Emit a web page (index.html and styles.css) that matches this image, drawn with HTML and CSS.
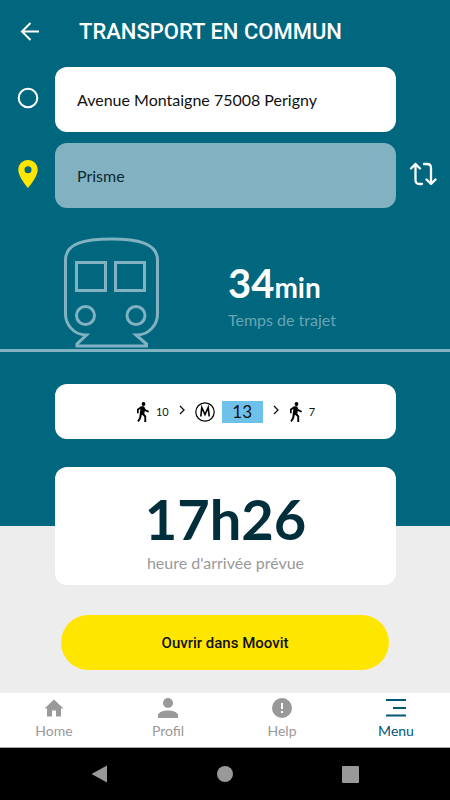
FILE: index.html
```html
<!DOCTYPE html>
<html lang="fr">
<head>
  <meta charset="UTF-8">
  <meta name="viewport" content="width=device-width, initial-scale=1.0">
  <title>Transport en commun</title>
  <link rel="stylesheet" href="styles.css">
</head>
<body>
  <div class="screen">
    <!-- Header -->
    <header class="header">
      <button class="icon-button" type="button" aria-label="Retour">
        <svg width="20" height="20" viewBox="0 0 20 20" fill="none" stroke="#fff" stroke-width="2">
          <path d="M19 9.500H2M10.500 1L2 9.500L10.500 18"/>
        </svg>
      </button>
      <h1>TRANSPORT EN COMMUN</h1>
    </header>

    <!-- Departure and destination -->
    <form class="route">
      <label for="from" aria-label="Départ">
        <svg width="22" height="22" viewBox="0 0 22 22" fill="none" stroke="#fff" stroke-width="2">
          <circle cx="11" cy="11" r="9.300"/>
        </svg>
      </label>
      <input type="text" id="from" value="Avenue Montaigne 75008 Perigny">
      <span></span>
      <label for="to" aria-label="Arrivée">
        <svg width="20" height="28" viewBox="0 0 20 28" fill="#ffe600">
          <path fill-rule="evenodd" d="M10 0C4.400 0 .3 4.300.3 9.800C.3 17 10 28 10 28S19.700 17 19.700 9.800C19.700 4.300 15.600 0 10 0ZM10 6.300A3.500 3.500 0 1 1 10 13.300A3.500 3.500 0 1 1 10 6.300Z"/>
        </svg>
      </label>
      <input type="text" id="to" class="to" value="Prisme">
      <button class="icon-button" type="button" aria-label="Inverser">
        <svg width="28" height="24" viewBox="0 0 28 24" fill="none" stroke="#fff" stroke-width="2.300" stroke-linecap="round" stroke-linejoin="round">
          <path d="M2 6.500L6.500 2L11 6.500M6.500 2V18Q6.500 22 10.500 22H13M15 2H18Q22 2 22 6V22M17.500 17.500L22 22L26.500 17.500"/>
        </svg>
      </button>
    </form>

    <!-- Travel time -->
    <section class="trip">
      <svg class="train" width="96" height="112" viewBox="0 0 96 112" fill="none" stroke="#82b2c1" stroke-width="3">
        <path d="M22 99C10 98 2.500 88 2.500 78V24C2.500 7 22 3 48 3S94.500 7 94.500 24V78C94.500 88 87 98 75 99H73L83.500 108V110H14V108L23.500 99Z"/>
        <rect x="13.500" y="26.500" width="29" height="28"/>
        <rect x="52.500" y="26.500" width="29" height="28"/>
        <circle cx="22.500" cy="79.500" r="9"/>
        <circle cx="73" cy="79.500" r="9"/>
      </svg>
      <div class="duration">
        <p class="minutes">34<span>min</span></p>
        <p class="caption">Temps de trajet</p>
      </div>
    </section>

    <!-- Steps -->
    <section class="steps-wrap">
      <div class="card steps">
        <svg class="walk" width="14" height="20" viewBox="0 0 14 20">
          <circle cx="7.500" cy="2" r="1.900"/>
          <path d="M5 4.300L8 4.200L9.500 7.200L13 9L12.300 10.500L8.800 8.900L8.300 11.700L10.200 14V20H8.300V14.800L5.900 12.600L5 16.500L2.800 20L1.300 19L3.200 15.700L4.400 7L2.700 8V11.200H1V7Z"/>
        </svg>
        <span class="walk-time">10</span>
        <svg class="chevron" width="6" height="14" viewBox="0 0 6 14"><path d="M1 1L5 5L1 9"/></svg>
        <svg class="metro" width="20" height="20" viewBox="0 0 20 20" fill="none" stroke="#000">
          <circle cx="10" cy="10" r="9.200" stroke-width="1.200"/>
          <path d="M5.800 14.500L6.800 5.500L10 12.500L13.200 5.500L14.200 14.500" stroke-width="1.600"/>
        </svg>
        <span class="line">13</span>
        <svg class="chevron" width="6" height="14" viewBox="0 0 6 14"><path d="M1 1L5 5L1 9"/></svg>
        <svg class="walk" width="14" height="20" viewBox="0 0 14 20">
          <circle cx="7.500" cy="2" r="1.900"/>
          <path d="M5 4.300L8 4.200L9.500 7.200L13 9L12.300 10.500L8.800 8.900L8.300 11.700L10.200 14V20H8.300V14.800L5.900 12.600L5 16.500L2.800 20L1.300 19L3.200 15.700L4.400 7L2.700 8V11.200H1V7Z"/>
        </svg>
        <span class="walk-time">7</span>
      </div>
    </section>

    <!-- Arrival time -->
    <section class="arrival">
      <div class="card arrival-card">
        <p class="hour">17h26</p>
        <p class="caption">heure d'arrivée prévue</p>
      </div>
    </section>

    <div class="action">
      <button class="open" type="button">Ouvrir dans Moovit</button>
    </div>

    <!-- Tab bar -->
    <nav class="tabs">
      <a href="#">
        <svg width="20" height="20" viewBox="0 0 20 20"><path d="M10 1.500L.5 10.500H3V18.500H8V12.500H12V18.500H17V10.500H19.500Z"/></svg>
        Home
      </a>
      <a href="#">
        <svg width="20" height="20" viewBox="0 0 20 20"><circle cx="10" cy="5" r="5"/><path d="M0 20V17.500C0 14 5 12.500 10 12.500S20 14 20 17.500V20Z"/></svg>
        Profil
      </a>
      <a href="#">
        <svg width="20" height="20" viewBox="0 0 20 20"><path fill-rule="evenodd" d="M10 0A10 10 0 1 1 10 20A10 10 0 1 1 10 0ZM9 5V11H11V5ZM9 13V15H11V13Z"/></svg>
        Help
      </a>
      <a href="#" class="active">
        <svg width="20" height="20" viewBox="0 0 20 20"><path d="M0 1H20V3H0ZM7 9H20V11H7ZM0 16.500H20V18.500H0Z"/></svg>
        Menu
      </a>
    </nav>

    <!-- System buttons -->
    <div class="system">
      <button type="button" aria-label="Précédent">
        <svg width="18" height="18" viewBox="0 0 18 18"><path d="M17 .5V17.500L1.500 9Z"/></svg>
      </button>
      <button type="button" aria-label="Accueil">
        <svg width="18" height="18" viewBox="0 0 18 18"><circle cx="9" cy="9" r="8"/></svg>
      </button>
      <button type="button" aria-label="Applications">
        <svg width="18" height="18" viewBox="0 0 18 18"><rect x="1" y="1" width="17" height="17" rx="1"/></svg>
      </button>
    </div>
  </div>
</body>
</html>
```
FILE: styles.css
```css
* {
  margin: 0;
  padding: 0;
  box-sizing: border-box;
}
body {
  background: #ededed;
  color: #111;
  font-family: Lato, "Open Sans", sans-serif;
  font-size: 16px;
}
svg {
  display: block;
}
button {
  border: none;
  background: none;
  cursor: pointer;
}
.screen {
  display: flex;
  flex-direction: column;
  min-height: 100vh;
}
.header,
.route,
.trip,
.steps-wrap {
  background: #00677f;
}
.header {
  display: flex;
  align-items: center;
  gap: 39px;
  height: 67px;
  padding: 0 20px 4px;
}
.header h1 {
  color: #fff;
  font-family: Roboto, sans-serif;
  font-size: 22px;
  font-weight: 500;
}
.route {
  display: grid;
  grid-template-columns: 55px 1fr 54px;
  row-gap: 11px;
  align-items: center;
  justify-items: center;
}
.route label,
.route button {
  padding-bottom: 3px;
}
.route input {
  width: 100%;
  height: 65px;
  padding: 0 22px;
  border: none;
  border-radius: 12px;
  background: #fff;
  color: #111;
  font: inherit;
}
.route .to {
  background: #82b2c1;
  color: #0c2a33;
}
.trip {
  display: flex;
  gap: 69px;
  padding: 28px 20px 1px 63px;
  border-bottom: 3px solid #82b2c1;
}
.duration {
  padding-top: 24px;
}
.minutes {
  color: #fff;
  font-size: 40px;
  font-weight: bold;
  line-height: 46px;
}
.minutes span {
  font-size: 28px;
}
.caption {
  color: #999;
  line-height: 20px;
}
.duration .caption {
  color: #6ba4b5;
}
.steps-wrap {
  padding: 32px 54px 28px 55px;
}
.card {
  border-radius: 12px;
  background: #fff;
}
.steps {
  display: flex;
  align-items: center;
  justify-content: center;
  height: 55px;
}
.walk-time {
  margin-left: 6px;
  font-size: 11px;
}
.chevron {
  margin: 0 10px;
  fill: none;
  stroke: #111;
  stroke-width: 1.3;
}
.line {
  width: 41px;
  margin-left: 7px;
  background: #6ec1e9;
  font-size: 17px;
  line-height: 22px;
  text-align: center;
}
.arrival {
  padding: 0 54px 0 55px;
  background: linear-gradient(#00677f 50%, #ededed 50%);
}
.arrival-card {
  padding: 18px 20px 12px;
  text-align: center;
}
.hour {
  color: #002f3b;
  font-size: 56px;
  font-weight: bold;
  line-height: 68px;
}
.action {
  padding: 30px 61px 23px;
}
.open {
  width: 100%;
  height: 55px;
  border-radius: 28px;
  background: #ffe600;
  color: #111;
  font-family: Roboto, sans-serif;
  font-size: 15px;
  font-weight: 500;
}
.tabs {
  display: flex;
  justify-content: space-between;
  margin-top: auto;
  padding: 5px 35px 7px;
  border-bottom: 1px solid #aaa;
  background: #fff;
}
.tabs a {
  display: flex;
  flex-direction: column;
  align-items: center;
  gap: 4px;
  width: 38px;
  color: #999;
  font-size: 14px;
  line-height: 18px;
  text-decoration: none;
}
.tabs svg,
.system svg {
  fill: #999;
}
.tabs .active {
  color: #00577a;
}
.tabs .active svg {
  fill: #00577a;
}
.system {
  display: flex;
  align-items: center;
  justify-content: space-between;
  height: 52px;
  padding: 0 91px 0 90px;
  background: #000;
}
```
